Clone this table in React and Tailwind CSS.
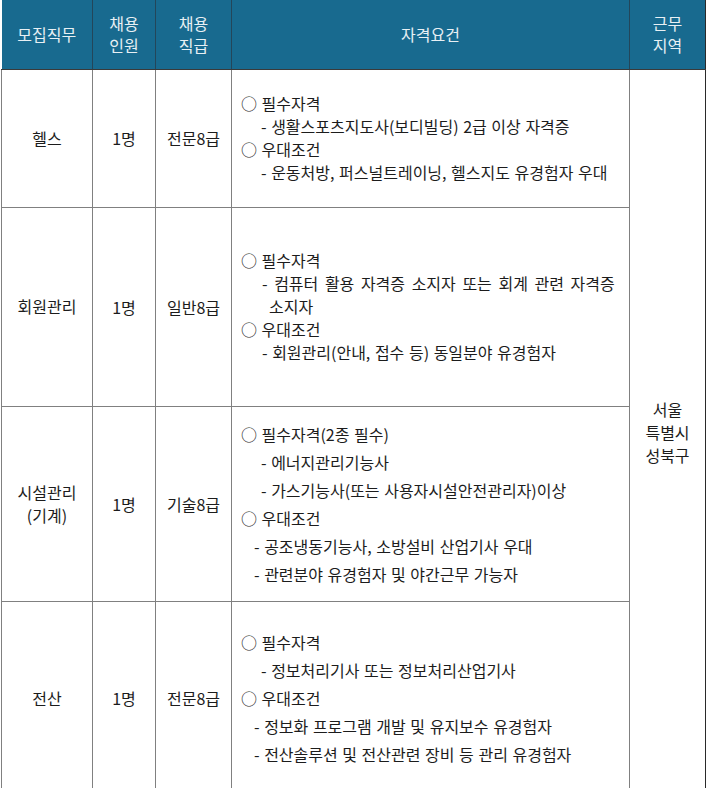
const ROWS = [
  {
    job: ["헬스"],
    count: "1명",
    grade: "전문8급",
    height: "h-[138px]",
    lh: "leading-[23px]",
    lines: [
      { t: "○ 필수자격" },
      { t: "- 생활스포츠지도사(보디빌딩) 2급 이상 자격증", pad: "pl-[20px]" },
      { t: "○ 우대조건" },
      { t: "- 운동처방, 퍼스널트레이닝, 헬스지도 유경험자 우대", pad: "pl-[20px]" },
    ],
  },
  {
    job: ["회원관리"],
    count: "1명",
    grade: "일반8급",
    height: "h-[199px]",
    lh: "leading-[23px]",
    lines: [
      { t: "○ 필수자격" },
      { t: "- 컴퓨터 활용 자격증 소지자 또는 회계 관련 자격증", pad: "pl-[21px] [word-spacing:3px]" },
      { t: "소지자", pad: "pl-[28px]" },
      { t: "○ 우대조건" },
      { t: "- 회원관리(안내, 접수 등) 동일분야 유경험자", pad: "pl-[21px]" },
    ],
  },
  {
    job: ["시설관리", "(기계)"],
    count: "1명",
    grade: "기술8급",
    height: "h-[195px]",
    lh: "leading-[28px]",
    lines: [
      { t: "○ 필수자격(2종 필수)" },
      { t: "- 에너지관리기능사", pad: "pl-[20px]" },
      { t: "- 가스기능사(또는 사용자시설안전관리자)이상", pad: "pl-[20px]" },
      { t: "○ 우대조건" },
      { t: "- 공조냉동기능사, 소방설비 산업기사 우대", pad: "pl-[13px]" },
      { t: "- 관련분야 유경험자 및 야간근무 가능자", pad: "pl-[13px]" },
    ],
  },
  {
    job: ["전산"],
    count: "1명",
    grade: "전문8급",
    height: "h-[194px]",
    lh: "leading-[28px]",
    lines: [
      { t: "○ 필수자격" },
      { t: "- 정보처리기사 또는 정보처리산업기사", pad: "pl-[20px]" },
      { t: "○ 우대조건" },
      { t: "- 정보화 프로그램 개발 및 유지보수 유경험자", pad: "pl-[13px]" },
      { t: "- 전산솔루션 및 전산관련 장비 등 관리 유경험자", pad: "pl-[13px]" },
    ],
  },
];

const font = { fontFamily: "'Noto Sans CJK KR', 'Noto Sans', sans-serif" };

export default function App() {
  return (
    <div className="w-[706px] h-[788px] overflow-hidden bg-white" style={font}>
      <table className="table-fixed border-collapse ml-px text-[16px] text-[#1c1c1c] [word-spacing:1px]">
        <colgroup>
          <col className="w-[91px]" />
          <col className="w-[63px]" />
          <col className="w-[76px]" />
          <col className="w-[398px]" />
          <col className="w-[76px]" />
        </colgroup>
        <thead>
          <tr className="h-[69px] bg-[#186a8f] text-[#e8f0f4] leading-[22px]">
            <th className="font-normal border-r border-[#23465a] border-b border-b-[#3a3a3a]">모집직무</th>
            <th className="font-normal border-r border-[#23465a] border-b border-b-[#3a3a3a]">
              채용<br />인원
            </th>
            <th className="font-normal border-r border-[#23465a] border-b border-b-[#3a3a3a]">
              채용<br />직급
            </th>
            <th className="font-normal border-r border-[#23465a] border-b border-b-[#3a3a3a]">자격요건</th>
            <th className="font-normal border-r border-[#2a2a2a] border-b border-b-[#3a3a3a]">
              근무<br />지역
            </th>
          </tr>
        </thead>
        <tbody>
          {ROWS.map((r, i) => (
            <tr key={i} className={r.height}>
              <td className="border border-[#808080] text-center leading-[23px]">
                {r.job.map((j) => (
                  <div key={j}>{j}</div>
                ))}
              </td>
              <td className="border border-[#808080] text-center">{r.count}</td>
              <td className="border border-[#808080] text-center">{r.grade}</td>
              <td className={`border border-[#808080] pl-[9px] align-middle ${r.lh}`}>
                {r.lines.map((l, k) => (
                  <div key={k} className={`whitespace-nowrap ${l.pad || ""}`}>
                    {l.t}
                  </div>
                ))}
              </td>
              {i === 0 && (
                <td
                  rowSpan={4}
                  className="border border-[#808080] border-r-[#2a2a2a] text-center leading-[23px]"
                >
                  서울<br />특별시<br />성북구
                </td>
              )}
            </tr>
          ))}
        </tbody>
      </table>
    </div>
  );
}
